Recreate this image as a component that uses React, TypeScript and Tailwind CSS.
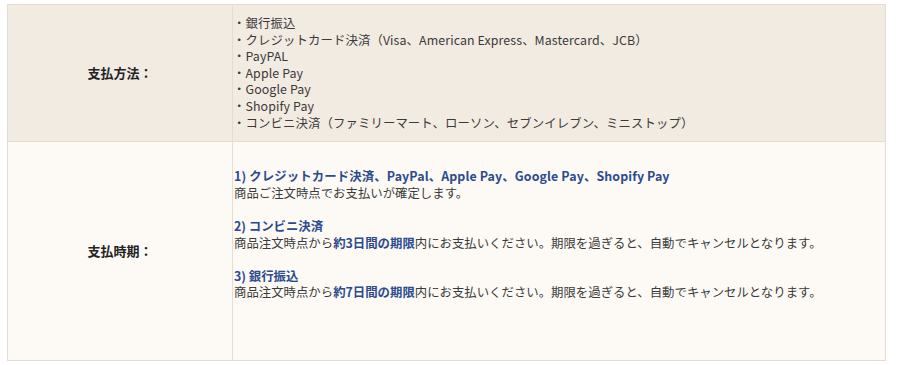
export default function App() {
  const font = { fontFamily: '"Noto Sans CJK JP", "Noto Sans", sans-serif' };
  const B = ({ children }: { children: React.ReactNode }) => (
    <span className="font-bold text-[#2c4b8e]">{children}</span>
  );
  return (
    <div className="w-[900px] h-[365px] bg-white pt-[4px] pl-[7px]" style={font}>
      <div className="w-[879px] border border-[#e3ddd4] text-[12.4px] leading-[16.6px] text-[#3a3a3a]">
        <div className="flex bg-[#f2ebe2] border-b border-[#e3ddd4]">
          <div className="w-[225px] shrink-0 flex items-center justify-center font-bold text-[#222] text-[13px] border-r border-[#e3ddd4]">
            支払方法：
          </div>
          <div className="flex-1 pt-[10px] pb-[10px] pl-[0px] tracking-[0.1px]">
            <div>・銀行振込</div>
            <div>・クレジットカード決済（Visa、American Express、Mastercard、JCB）</div>
            <div>・PayPAL</div>
            <div>・Apple Pay</div>
            <div>・Google Pay</div>
            <div>・Shopify Pay</div>
            <div>・コンビニ決済（ファミリーマート、ローソン、セブンイレブン、ミニストップ）</div>
          </div>
        </div>
        <div className="flex bg-[#fdfaf5]">
          <div className="w-[225px] shrink-0 flex items-center justify-center font-bold text-[#222] text-[13px] border-r border-[#e3ddd4]">
            支払時期：
          </div>
          <div className="flex-1 pt-[26px] pb-[26px] pl-[1px]">
            <div className="tracking-[0.12px]"><B>1) クレジットカード決済、PayPal、Apple Pay、Google Pay、Shopify Pay</B></div>
            <div>商品ご注文時点でお支払いが確定します。</div>
            <div>&nbsp;</div>
            <div><B>2) コンビニ決済</B></div>
            <div>商品注文時点から<B>約3日間の期限</B>内にお支払いください。期限を過ぎると、自動でキャンセルとなります。</div>
            <div>&nbsp;</div>
            <div><B>3) 銀行振込</B></div>
            <div>商品注文時点から<B>約7日間の期限</B>内にお支払いください。期限を過ぎると、自動でキャンセルとなります。</div>
            <div>&nbsp;</div>
            <div>&nbsp;</div>
          </div>
        </div>
      </div>
    </div>
  );
}
